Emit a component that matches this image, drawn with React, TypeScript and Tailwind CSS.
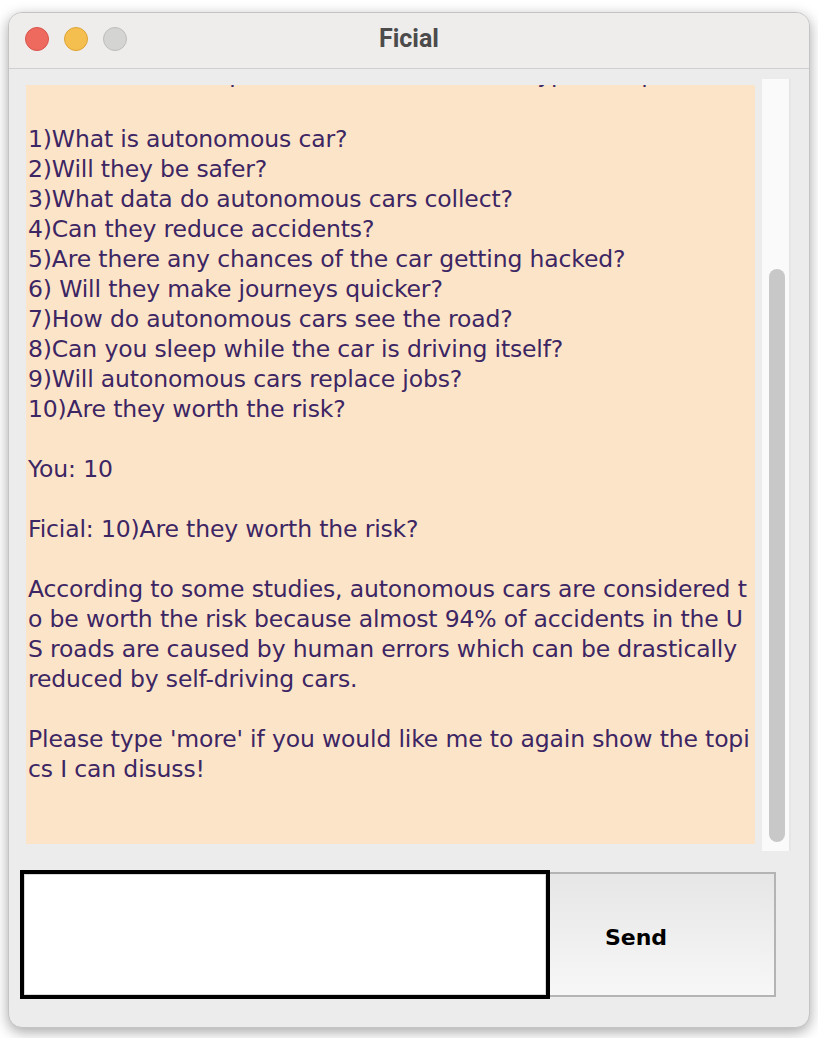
import React from 'react'

const chat = [
  'Here are some topics I can discuss. Please type the question number:',
  '',
  '1)What is autonomous car?',
  '2)Will they be safer?',
  '3)What data do autonomous cars collect?',
  '4)Can they reduce accidents?',
  '5)Are there any chances of the car getting hacked?',
  '6) Will they make journeys quicker?',
  '7)How do autonomous cars see the road?',
  '8)Can you sleep while the car is driving itself?',
  '9)Will autonomous cars replace jobs?',
  '10)Are they worth the risk?',
  '',
  'You: 10',
  '',
  'Ficial: 10)Are they worth the risk?',
  '',
  'According to some studies, autonomous cars are considered t',
  'o be worth the risk because almost 94% of accidents in the U',
  'S roads are caused by human errors which can be drastically',
  'reduced by self-driving cars.',
  '',
  "Please type 'more' if you would like me to again show the topi",
  'cs I can disuss!',
]

export default function App() {
  return (
    <div className="min-h-screen w-[818px] h-[1038px] bg-white p-[8px] pt-[12px] pb-[10px] font-['DejaVu_Sans',sans-serif]">
      <div className="flex h-full flex-col overflow-hidden rounded-[14px] border border-[#c4c4c4] bg-[#ececec] shadow-[0_4px_14px_rgba(0,0,0,0.35)]">
        {/* title bar */}
        <div className="relative flex h-[56px] shrink-0 items-center justify-center border-b border-[#cfcfcf] bg-[#eeedeb]">
          <div className="absolute left-[16px] top-[14px] flex gap-[15px]">
            <span className="h-[24px] w-[24px] rounded-full border border-[#d9534a] bg-[#ee6a5f]" />
            <span className="h-[24px] w-[24px] rounded-full border border-[#dca437] bg-[#f5bf4f]" />
            <span className="h-[24px] w-[24px] rounded-full border border-[#bdbdbd] bg-[#d4d4d2]" />
          </div>
          <span className="-mt-[4px] font-['Roboto',sans-serif] text-[25px] font-bold text-[#4b4b4b]">Ficial</span>
        </div>

        {/* chat area */}
        <div className="flex h-[784px] shrink-0 gap-[7px] pl-[17px] pt-[10px]">
          <div className="mt-[6px] h-[759px] w-[729px] overflow-hidden bg-[#fce4c9] text-[#3c2663]">
            <div className="-mt-[26px] pl-[2px] text-[23.5px] leading-[30px] tracking-[-0.15px]">
              {chat.map((l, i) => (
                <div key={i} className={i === 1 ? 'h-[35px]' : 'h-[30px] whitespace-pre'}>{l}</div>
              ))}
            </div>
          </div>
          <div className="flex h-[772px] w-[29px] justify-start border-r-[2px] border-[#e6e6e6] bg-[#fafafa] pl-[7px]">
            <div className="mt-[190px] h-[573px] w-[16px] rounded-full bg-[#c8c8c8]" />
          </div>
        </div>

        {/* input row */}
        <div className="flex items-center pl-[11px] pt-[17px]">
          <div className="h-[129px] w-[530px] border-[4px] border-black bg-white shadow-[inset_0_0_0_1px_#d8d8d8]" />
          <button className="h-[125px] w-[226px] border-[2px] border-l-0 border-[#b4b4b4] bg-gradient-to-b from-[#e6e6e6] to-[#f7f7f7] pr-[52px] pt-[6px] text-[22px] font-bold text-black">
            Send
          </button>
        </div>
      </div>
    </div>
  )
}
